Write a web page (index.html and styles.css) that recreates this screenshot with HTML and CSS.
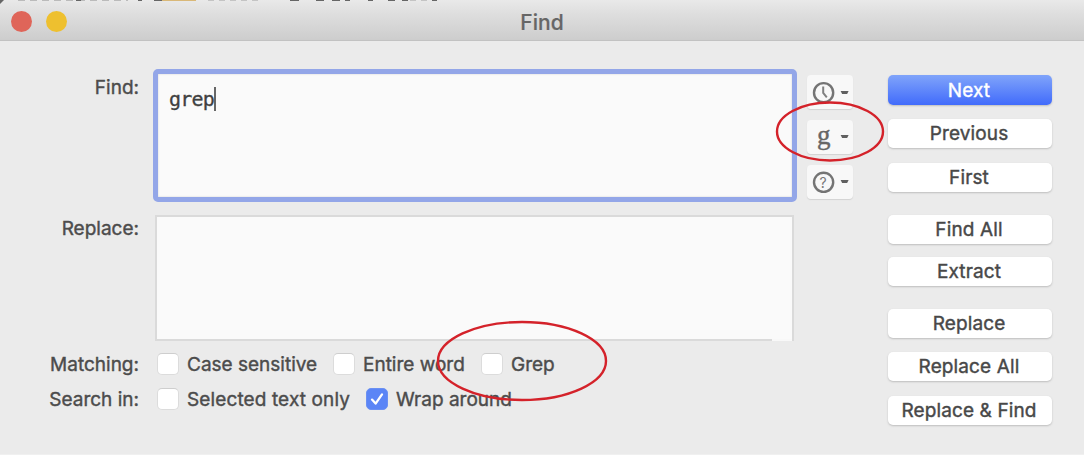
FILE: index.html
```
<!DOCTYPE html>
<html lang="en">
<head>
<meta charset="utf-8">
<title>Find</title>
<link rel="stylesheet" href="styles.css">
</head>
<body>
<div class="window">
  <header class="titlebar">
    <svg class="backdrop" width="1084" height="4" viewBox="0 0 1084 4">
      <path d="M0 0H4L0 4Z" fill="#666"/>
      <g fill="none" stroke-width="2">
        <path d="M18 0h110" stroke="#bbb" stroke-dasharray="7 5"/>
        <path d="M76 0h5M138 0h4M154 0h8M290 0h9M316 0h8M332 0h8M345 0h5M368 0h5M388 0h7M402 0h6M432 0h5" stroke="#666"/>
        <path d="M162 0h34" stroke="#d9b878"/>
        <path d="M208 0h55M410 0h18" stroke="#c4c4c4" stroke-dasharray="6 5"/>
      </g>
    </svg>
    <div class="lights"><span class="light close"></span><span class="light minimize"></span></div>
    <h1 class="title">Find</h1>
  </header>
  <main class="content">
    <section class="form">
      <div class="row find-row"><span class="label">Find:</span><div class="field focused"><span class="query">grep</span></div></div>
      <div class="row replace-row"><span class="label">Replace:</span><div class="field"></div></div>
      <div class="row options matching">
        <span class="label">Matching:</span>
        <label class="option case"><span class="box"></span><span class="caption">Case sensitive</span></label>
        <label class="option entire"><span class="box"></span><span class="caption">Entire word</span></label>
        <label class="option grep"><span class="box"></span><span class="caption">Grep</span></label>
      </div>
      <div class="row options searching">
        <span class="label">Search in:</span>
        <label class="option selected"><span class="box"></span><span class="caption">Selected text only</span></label>
        <label class="option wrap"><span class="box checked"><svg width="20" height="20" viewBox="0 0 20 20"><path d="M5 10.6 8.6 14.6 15 5.4" fill="none" stroke="#fff" stroke-width="2.3" stroke-linecap="round" stroke-linejoin="round"/></svg></span><span class="caption">Wrap around</span></label>
      </div>
    </section>
    <nav class="tools">
      <button class="tool">
        <svg width="46" height="34" viewBox="0 0 46 34"><circle cx="16.6" cy="17.7" r="9.6" fill="none" stroke="#747474" stroke-width="2.4"/><path d="M16.2 11.5V18l3.6 4.4" fill="none" stroke="#808080" stroke-width="2"/><path d="M33.6 16h8l-1.5 3h-5Z" fill="#606060"/></svg>
      </button>
      <button class="tool">
        <span class="glyph">g</span>
        <svg width="46" height="34" viewBox="0 0 46 34"><path d="M33.6 15h8l-1.5 3h-5Z" fill="#606060"/></svg>
      </button>
      <button class="tool">
        <span class="help">?</span>
        <svg width="46" height="34" viewBox="0 0 46 34"><circle cx="16.6" cy="17.3" r="9.6" fill="none" stroke="#747474" stroke-width="2.4"/><path d="M33.6 15h8l-1.5 3h-5Z" fill="#606060"/></svg>
      </button>
    </nav>
    <aside class="actions">
      <button class="button primary">Next</button>
      <button class="button previous">Previous</button>
      <button class="button first">First</button>
      <button class="button find-all">Find All</button>
      <button class="button extract">Extract</button>
      <button class="button replace">Replace</button>
      <button class="button replace-all">Replace All</button>
      <button class="button replace-find">Replace &amp; Find</button>
    </aside>
  </main>
  <svg class="annotations" width="1084" height="455" viewBox="0 0 1084 455">
    <ellipse cx="830" cy="131.5" rx="53" ry="29"/>
    <ellipse cx="522" cy="361" rx="84" ry="39"/>
  </svg>
</div>
</body>
</html>
```
FILE: styles.css
```
* { box-sizing: border-box; }
body { margin: 0; font-family: Inter, "Liberation Sans", sans-serif; font-size: 19px; color: #4c4c4c; }
.window { position: relative; width: 1084px; height: 455px; overflow: hidden; background: #ebebeb; border-bottom: 1px solid #f0f0f0; }
.titlebar { position: relative; display: grid; grid-template-columns: 1fr auto 1fr; height: 41px; padding-top: 3px; align-items: center; background: linear-gradient(#e9e9e9, #dedede 35%, #cdcdcd); border-bottom: 1px solid #c2c2c2; }
.backdrop { position: absolute; left: 0; top: 0; }
.lights { display: flex; gap: 13px; padding-left: 11px; }
.light { width: 21px; height: 21px; border-radius: 50%; }
.lights { gap: 14px; }
.close { background: #df6559; }
.minimize { background: #eec02f; }
.title { margin: 2px 0 0; font-size: 21px; line-height: 24px; font-weight: 500; color: #666; -webkit-text-stroke: .2px; }
.content { display: grid; grid-template-columns: 797px 46px 164px; }
.form { padding-top: 28px; }
.row { display: grid; grid-template-columns: 139px 1fr; align-items: start; }
.label { text-align: right; line-height: 24px; -webkit-text-stroke: .4px; }
.find-row { height: 133px; column-gap: 14px; }
.find-row .label { padding-top: 7px; }
.field { position: relative; height: 126px; margin-right: 3px; background: #fafafa; border: 2px solid #dadada; }
.replace-row .field::after { content: ""; position: absolute; right: 0; bottom: -2px; width: 20px; height: 2px; background: #f8f8f8; }
.focused { height: 133px; margin-right: 0; padding: 13px 11px; border: 5px solid #93a6e8; border-radius: 5px; box-shadow: inset 0 0 2px #ccc; }
.query { display: inline-block; height: 24px; padding-right: 0; border-right: 2px solid #666; font: 20px/25px "DejaVu Sans Mono", monospace; letter-spacing: -.75px; color: #404040; -webkit-text-stroke: .3px; }
.replace-row { height: 126px; margin-top: 13px; column-gap: 16px; }
.replace-row .label { padding-top: 2px; }
.options { display: flex; height: 24px; align-items: center; }
.options .label { width: 139px; flex: none; margin-right: 18px; padding-top: 2px; }
.matching { margin-top: 11px; }
.searching { margin-top: 11px; }
.option { display: flex; align-items: center; gap: 8px; line-height: 24px; white-space: nowrap; -webkit-text-stroke: .4px; }
.caption { padding-top: 2px; }
.case { width: 176px; }
.entire { width: 148px; }
.selected { width: 209px; letter-spacing: .12px; }
.box { width: 22px; height: 22px; flex: none; background: #fff; border: 1px solid #dcdcdc; border-top-color: #cecece; border-radius: 5px; }
.checked { background: #5b85f6; border-color: #6b90f2; }
.box svg { display: block; }
.tools { display: flex; flex-direction: column; gap: 11px; width: 46px; margin-left: 10px; padding-top: 34px; }
.tool { position: relative; width: 46px; height: 34px; padding: 0; border: 0; border-radius: 4px; background: #f8f8f8; box-shadow: 0 1px 1px #d3d3d3; }
.tool svg { display: block; }
.glyph { position: absolute; left: 10px; top: 0; font: 27px/30px "Liberation Serif", serif; color: #666; -webkit-text-stroke: .4px; }
.help { position: absolute; left: 12.5px; top: 10px; font: 14px/15px Inter, sans-serif; color: #777; }
.actions { display: flex; flex-direction: column; width: 164px; margin-left: 45px; padding-top: 34px; }
.button { height: 29px; flex: none; padding: 1px 2px 1px 0; border: 0; border-radius: 5px; background: #fff; box-shadow: 0 1px 2px #bdbdbd; font: 19px/27px Inter, "Liberation Sans", sans-serif; letter-spacing: .12px; color: #484848; white-space: nowrap; -webkit-text-stroke: .4px; }
.primary { height: 30px; background: linear-gradient(#80a4fa, #416bfb); color: #fff; }
.previous { margin-top: 14px; }
.first { margin-top: 15px; }
.find-all { margin-top: 23px; }
.extract { margin-top: 13px; }
.replace { margin-top: 23px; }
.replace-all { margin-top: 14px; }
.replace-find { margin-top: 15px; }
.annotations { position: absolute; left: 0; top: 0; fill: none; stroke: #d4222a; stroke-width: 2.4; pointer-events: none; }
```
